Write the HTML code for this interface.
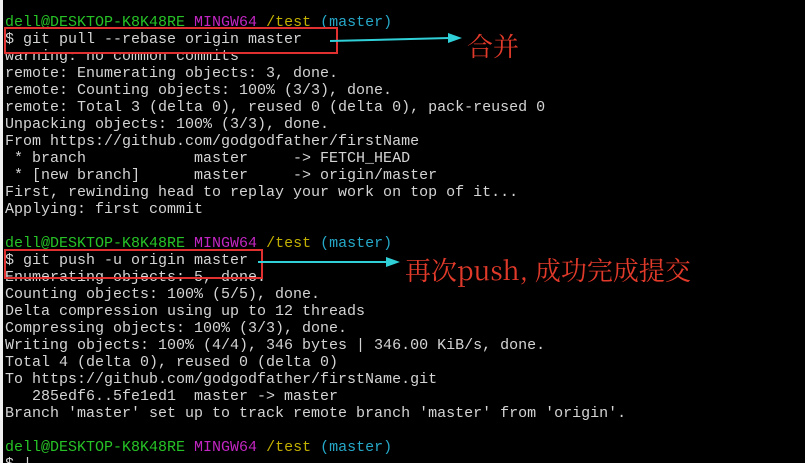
<!DOCTYPE html>
<html><head><meta charset="utf-8"><style>
html,body{margin:0;padding:0;background:#000;width:805px;height:463px;overflow:hidden;position:relative}
.t{position:absolute;left:5px;top:14px;font-family:"Liberation Mono",monospace;font-size:15px;line-height:17px;color:#d4d4d4;white-space:pre;letter-spacing:0}
.g{color:#26c226}.m{color:#c226c2}.y{color:#c2b000}.c{color:#26a8c8}
.box{position:absolute;border:2px solid #e03030}
.cn{position:absolute;color:#e23a2a;font-family:"Noto Serif CJK SC","Liberation Serif",serif;font-size:26px;line-height:30px;white-space:nowrap}
</style></head><body>
<div style="position:absolute;left:0;top:0;width:3px;height:463px;background:#f0f0f0"></div>
<div class="t"><span class="g">dell@DESKTOP-K8K48RE</span> <span class="m">MINGW64</span> <span class="y">/test</span> <span class="c">(master)</span>
$ git pull --rebase origin master
warning: no common commits
remote: Enumerating objects: 3, done.
remote: Counting objects: 100% (3/3), done.
remote: Total 3 (delta 0), reused 0 (delta 0), pack-reused 0
Unpacking objects: 100% (3/3), done.
From https://github.com/godgodfather/firstName
 * branch            master     -> FETCH_HEAD
 * [new branch]      master     -> origin/master
First, rewinding head to replay your work on top of it...
Applying: first commit

<span class="g">dell@DESKTOP-K8K48RE</span> <span class="m">MINGW64</span> <span class="y">/test</span> <span class="c">(master)</span>
$ git push -u origin master
Enumerating objects: 5, done.
Counting objects: 100% (5/5), done.
Delta compression using up to 12 threads
Compressing objects: 100% (3/3), done.
Writing objects: 100% (4/4), 346 bytes | 346.00 KiB/s, done.
Total 4 (delta 0), reused 0 (delta 0)
To https://github.com/godgodfather/firstName.git
   285edf6..5fe1ed1  master -> master
Branch 'master' set up to track remote branch 'master' from 'origin'.

<span class="g">dell@DESKTOP-K8K48RE</span> <span class="m">MINGW64</span> <span class="y">/test</span> <span class="c">(master)</span>
$ |</div>
<div class="box" style="left:4px;top:27px;width:330px;height:23px"></div>
<div class="box" style="left:4px;top:249px;width:255px;height:26px"></div>
<svg style="position:absolute;left:0;top:0" width="805" height="463">
<line x1="330" y1="41" x2="450" y2="38" stroke="#30d0d8" stroke-width="2"/>
<polygon points="448,33 462,38 448,43" fill="#30d0d8"/>
<line x1="258" y1="262" x2="388" y2="262" stroke="#30d0d8" stroke-width="2"/>
<polygon points="386,257 400,262 386,267" fill="#30d0d8"/>
</svg>
<div class="cn" style="left:467px;top:31px">合并</div>
<div class="cn" style="left:405px;top:255px">再次push, 成功完成提交</div>
</body></html>
